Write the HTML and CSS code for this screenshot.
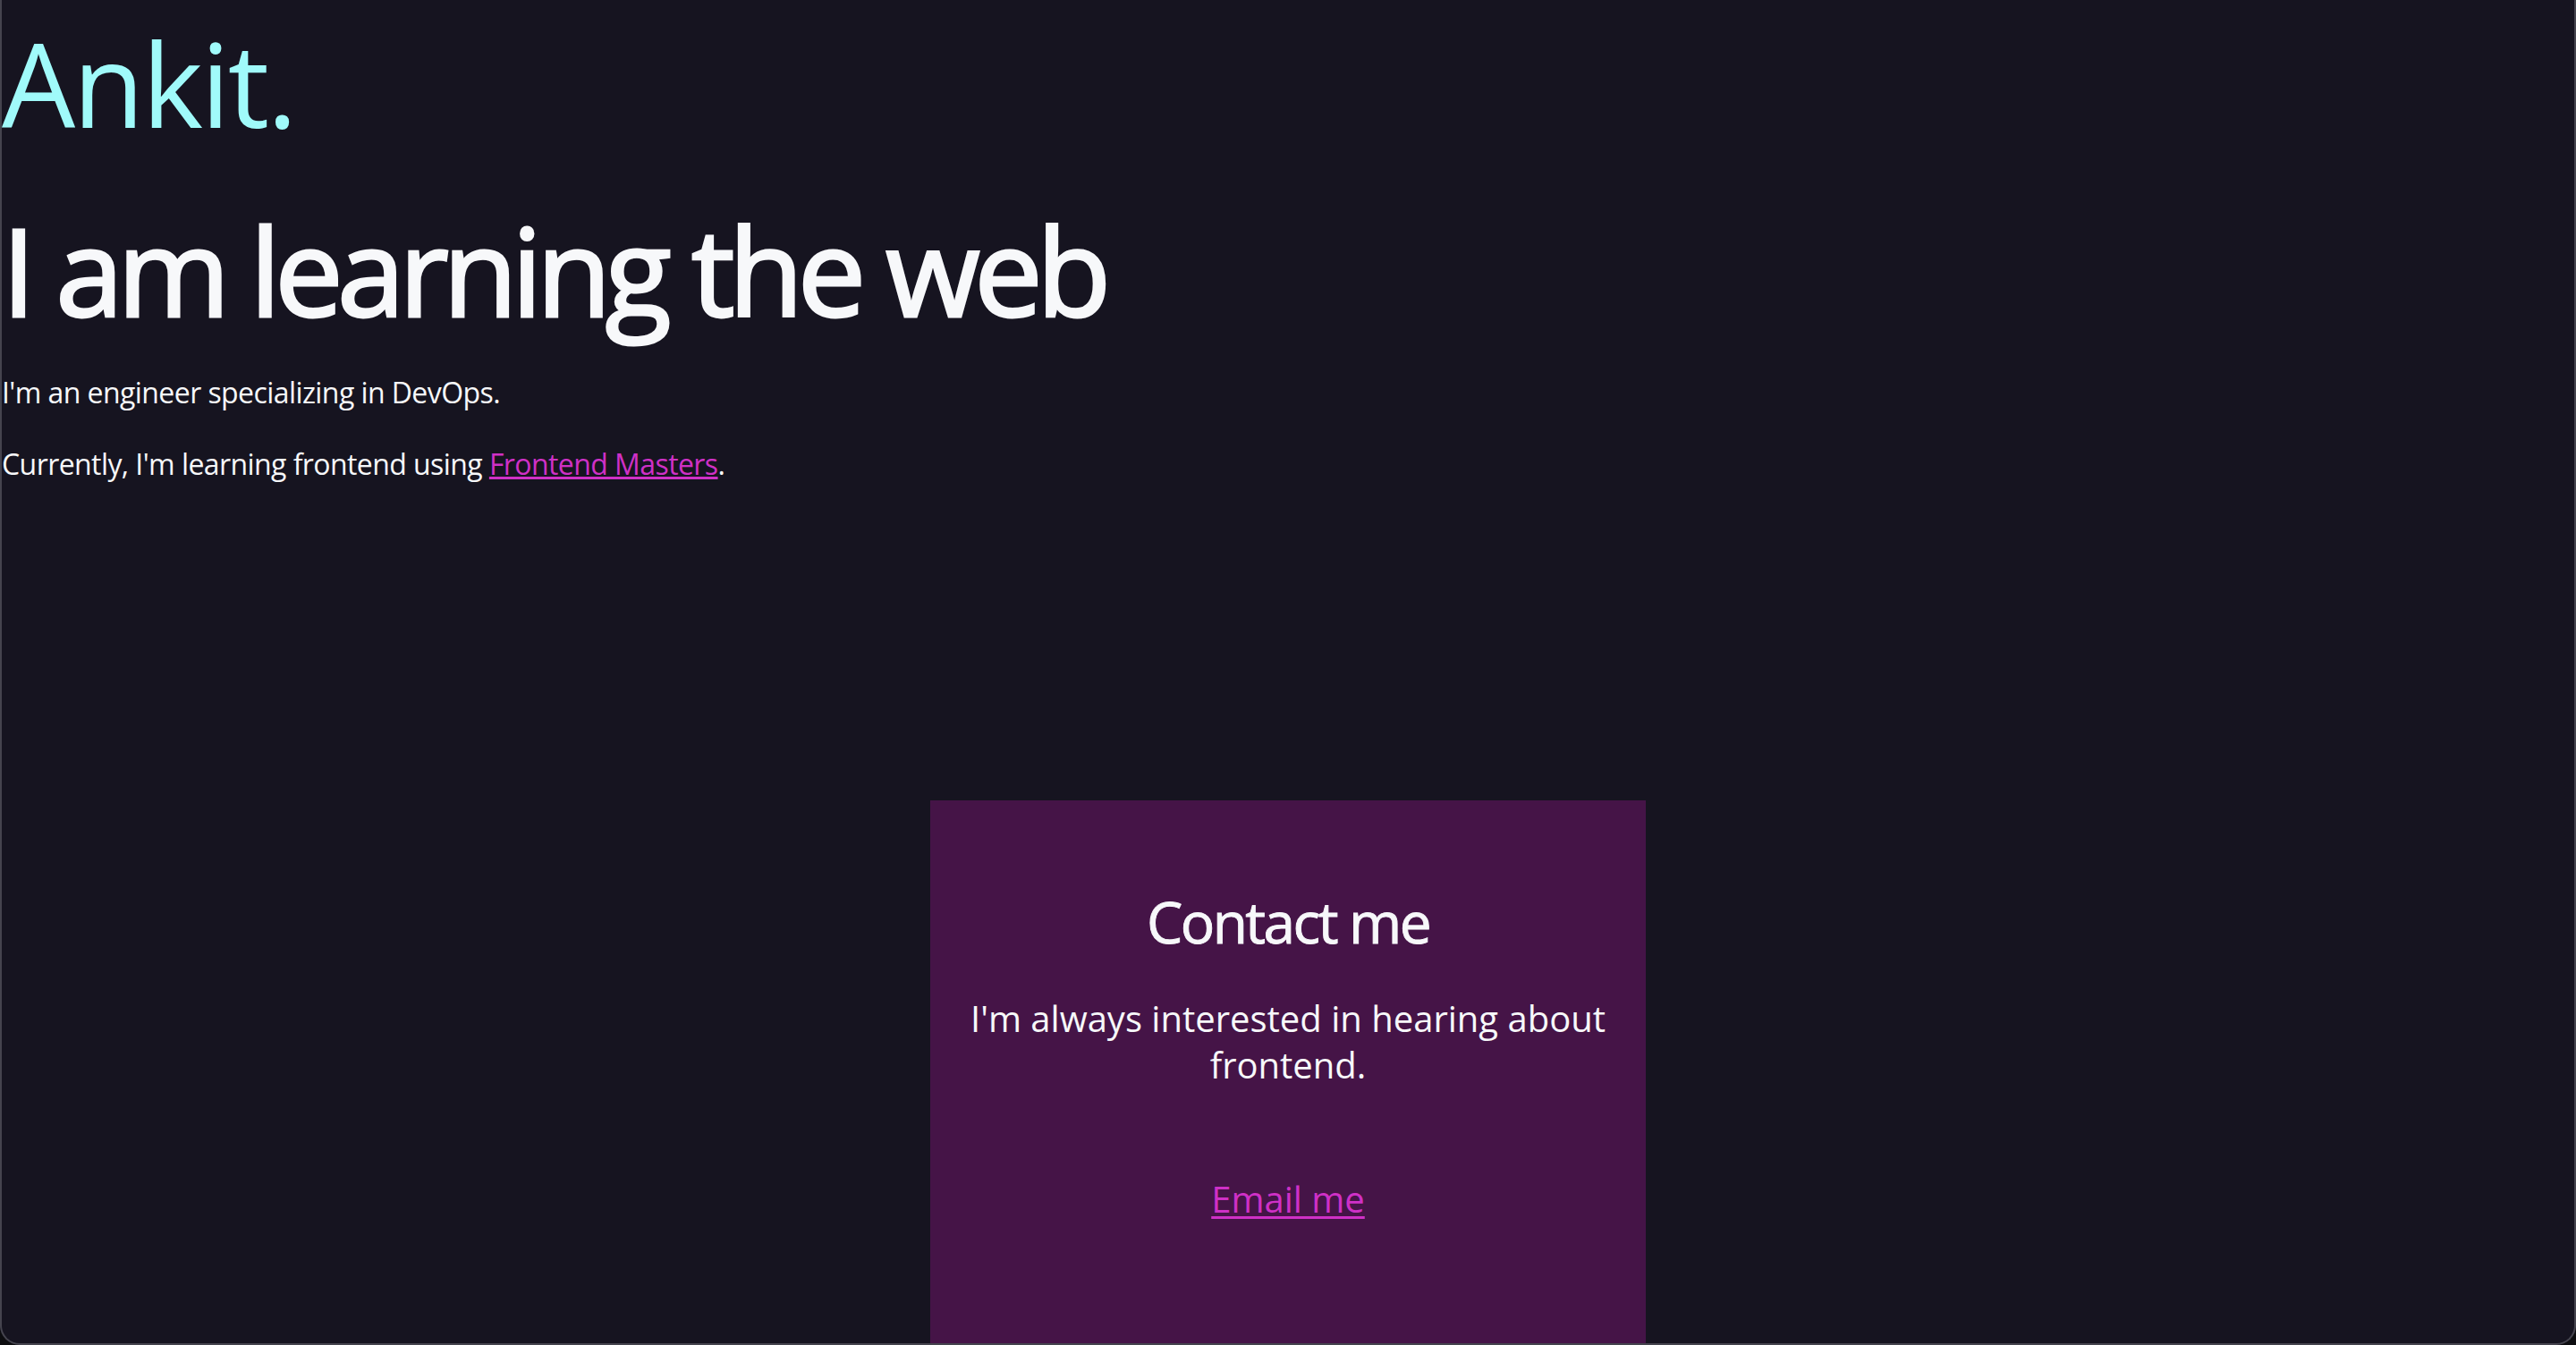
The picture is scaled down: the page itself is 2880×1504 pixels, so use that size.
FILE: index.html
```html
<!DOCTYPE html>
<html lang="en">
<head>
<meta charset="utf-8">
<title>Ankit.</title>
<link rel="stylesheet" href="styles.css">
</head>
<body>
  <header class="site-header">
    <div class="logo">Ankit.</div>
  </header>
  <main>
    <section class="hero">
      <h1 class="hero-title">I am learning the web</h1>
      <p class="hero-text">I'm an engineer specializing in DevOps.</p>
      <p class="hero-text">Currently, I'm learning frontend using <a class="link" href="#">Frontend Masters</a>.</p>
    </section>
    <section class="contact">
      <h2 class="contact-title">Contact me</h2>
      <p class="contact-text">I'm always interested in hearing about frontend.</p>
      <p class="contact-cta"><a class="link" href="#">Email me</a></p>
    </section>
  </main>
</body>
</html>
```

FILE: styles.css
```css
* {
  box-sizing: border-box;
}

html,
body {
  height: 100%;
}

body {
  margin: 0;
  padding: 0 2px;
  background: #161420;
  color: #f7f8fa;
  font-family: "Open Sans", "Noto Sans", sans-serif;
  overflow: hidden;
}

body::after {
  content: "";
  position: fixed;
  inset: 0;
  border: 2px solid #45444e;
  border-top: none;
  border-radius: 0 0 22px 22px;
  box-shadow: 0 0 0 40px #0d0d10;
  pointer-events: none;
}

.site-header {
  padding-top: 28px;
}

.logo {
  font-size: 130px;
  line-height: 1;
  font-weight: 400;
  color: #a0fafa;
  letter-spacing: -0.02em;
}

.hero-title {
  margin: 76px 0 47px;
  font-size: 136px;
  line-height: 1;
  font-weight: 400;
  letter-spacing: -0.048em;
  -webkit-text-stroke: 3px currentColor;
}

.hero-text {
  margin: 0;
  font-size: 32px;
  line-height: 44px;
  letter-spacing: -0.018em;
}

.hero-text + .hero-text {
  margin-top: 36px;
}

.link {
  color: #cf30c6;
  text-decoration: underline;
}

.contact {
  width: 800px;
  margin: 354px auto 0;
  padding: 104px 28px 137px;
  background: #451447;
  text-align: center;
}

.contact-title {
  margin: 0;
  font-size: 64px;
  line-height: 1;
  font-weight: 400;
  letter-spacing: -0.04em;
  -webkit-text-stroke: 0.9px currentColor;
}

.contact-text {
  margin: 50px 0 0;
  font-size: 40px;
  line-height: 52px;
  letter-spacing: 0;
}

.contact-cta {
  margin: 98px 0 0;
  font-size: 40px;
  line-height: 52px;
  letter-spacing: 0;
}

.contact-cta .link {
  text-decoration-thickness: 3px;
  text-underline-offset: 4px;
}
```
